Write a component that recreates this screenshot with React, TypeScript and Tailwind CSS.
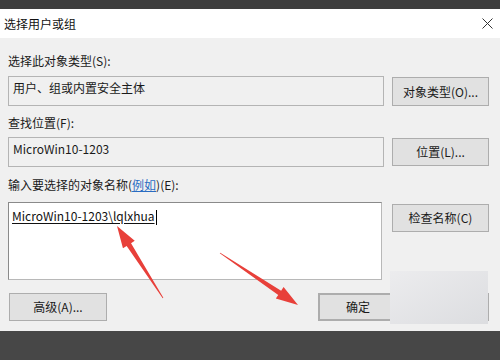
import React from "react";

function arrowPoints(tx: number, ty: number, hx: number, hy: number) {
  const dx = hx - tx;
  const dy = hy - ty;
  const len = Math.sqrt(dx * dx + dy * dy);
  const ux = dx / len;
  const uy = dy / len;
  const px = -uy;
  const py = ux;
  const headLen = 22;
  const headW = 7;
  const shaftW = 2.6;
  const bx = hx - ux * headLen;
  const by = hy - uy * headLen;
  const pts: [number, number][] = [
    [tx + px * 0.4, ty + py * 0.4],
    [bx + px * shaftW, by + py * shaftW],
    [bx + px * headW, by + py * headW],
    [hx, hy],
    [bx - px * headW, by - py * headW],
    [bx - px * shaftW, by - py * shaftW],
    [tx - px * 0.4, ty - py * 0.4],
  ];
  return pts.map((p) => p.join(",")).join(" ");
}

const font = { fontFamily: '"Noto Sans CJK SC", "Noto Sans", sans-serif' };

function Btn({ children, className = "" }: { children: React.ReactNode; className?: string }) {
  return (
    <div
      className={
        "flex items-center justify-center bg-[#e1e1e1] border border-[#adadad] text-[12px] text-[#1a1a1a] " +
        className
      }
    >
      {children}
    </div>
  );
}

export default function App() {
  return (
    <div className="relative w-[500px] h-[360px] overflow-hidden bg-[#474747] flex flex-col" style={font}>
      <div className="h-[9px] bg-[#3e3e3e]" />
      <div className="h-[29px] bg-white flex items-center justify-between pl-[4px] pr-[8px]">
        <span className="text-[12px] text-[#111] leading-none">选择用户或组</span>
        <svg width="11" height="11" viewBox="0 0 11 11" className="mr-[-1px]">
          <path d="M0.5 0.5 L10.5 10.5 M10.5 0.5 L0.5 10.5" stroke="#333" strokeWidth="1" fill="none" />
        </svg>
      </div>
      <div className="h-[293px] bg-[#f0f0f0] px-[8px] flex flex-col text-[12px] text-[#1a1a1a]">
        <div className="h-[16px] mt-[15px] leading-[16px]">选择此对象类型(S):</div>
        <div className="mt-[7px] flex items-start gap-[8px]">
          <div className="w-[376px] h-[30px] border border-[#b4b4b4] bg-[#f0f0f0] px-[4px] leading-[22px]">
            用户、组或内置安全主体
          </div>
          <Btn className="w-[97px] h-[29px] mt-[1px]">对象类型(O)...</Btn>
        </div>
        <div className="h-[16px] mt-[9px] leading-[16px]">查找位置(F):</div>
        <div className="mt-[6px] flex items-start gap-[8px]">
          <div className="w-[376px] h-[30px] border border-[#b4b4b4] bg-[#f0f0f0] px-[4px] leading-[22px]">
            MicroWin10-1203
          </div>
          <Btn className="w-[97px] h-[28px] mt-[1px]">位置(L)...</Btn>
        </div>
        <div className="h-[16px] mt-[10px] leading-[16px]">
          输入要选择的对象名称(<span className="text-[#2a6cc2] underline">例如</span>)(E):
        </div>
        <div className="mt-[9px] flex items-start gap-[10px]">
          <div className="w-[374px] h-[78px] border border-[#b8b8b8] border-t-[#8a8a8a] border-l-[#8a8a8a] bg-white px-[3px] pt-[4px]">
            <span className="underline underline-offset-2 leading-[16px] text-[#111]">MicroWin10-1203\lqlxhua</span>
            <span className="inline-block w-[1px] h-[15px] bg-black align-middle ml-[1px]" />
          </div>
          <Btn className="w-[97px] h-[28px] mt-[2px]">检查名称(C)</Btn>
        </div>
        <div className="mt-[13px] w-[481px] flex items-start">
          <Btn className="w-[98px] h-[28px] ml-[1px]">高级(A)...</Btn>
          <div className="flex-1" />
          <Btn className="w-[80px] h-[28px] border-2 border-[#2c7bb8]">确定</Btn>
          <Btn className="w-[83px] h-[28px] ml-[8px]">取消</Btn>
        </div>
      </div>
      <div className="flex-1" />

      <div className="absolute left-[390px] top-[271px] w-[98px] h-[53px] bg-gradient-to-br from-[#ececee] to-[#dcdde0]" />

      <svg className="absolute left-0 top-0" width="500" height="360">
        <polygon points={arrowPoints(163, 298, 117, 226)} fill="#e8403a" />
        <polygon points={arrowPoints(220, 253, 298, 305)} fill="#e8403a" />
      </svg>
    </div>
  );
}
